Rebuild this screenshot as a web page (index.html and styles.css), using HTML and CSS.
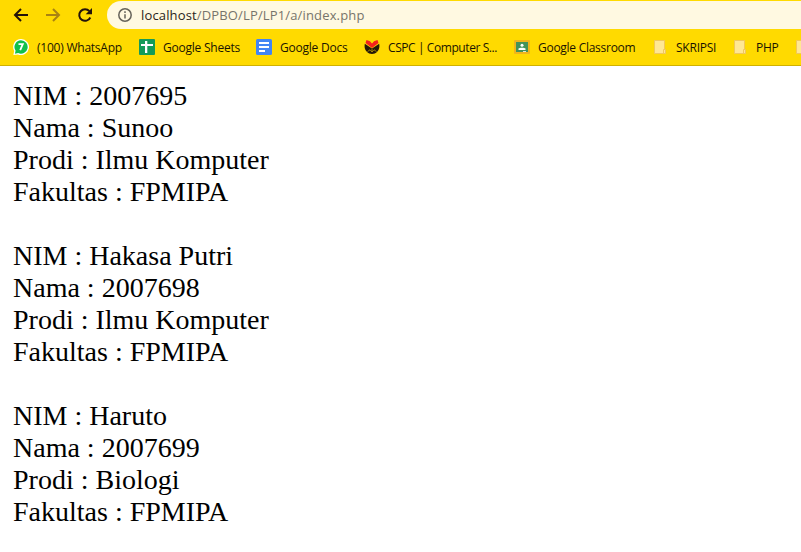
FILE: index.html
```html
<!DOCTYPE html>
<html lang="id">
<head>
<meta charset="utf-8">
<title>localhost/DPBO/LP/LP1/a/index.php</title>
<link rel="stylesheet" href="styles.css">
</head>
<body>
<header class="browser">
  <div class="toolbar">
    <svg class="nav" width="16" height="16" viewBox="0 0 16 16"><path d="M15 8H2.500M8 2L2 8l6 6"/></svg>
    <svg class="nav nav-off" width="16" height="16" viewBox="0 0 16 16"><path d="M1 8h12.500M8 2l6 6-6 6"/></svg>
    <svg class="nav" width="16" height="16" viewBox="0 0 16 16"><path d="M13.300 10.500A5.800 5.800 0 1 1 12.400 4.200"/><path class="solid" d="M15 1v6.300H8.700z"/></svg>
    <div class="address">
      <svg class="info" width="14" height="14" viewBox="0 0 14 14"><circle cx="7" cy="7" r="6.200"/><path d="M7 6.200v4.300M7 3.300v1.600"/></svg>
      <span class="url"><b>localhost</b>/DPBO/LP/LP1/a/index.php</span>
    </div>
  </div>
  <nav class="bookmarks">
    <a class="mark whatsapp"><svg width="16" height="16" viewBox="0 0 16 16"><path fill="#fff" d="M8 0a8 8 0 1 1-3 15.400L.4 16l.8-4A8 8 0 0 1 8 0z"/><path fill="#12c04b" d="M8 1.300a6.700 6.700 0 1 1-2.800 12.800l-3.300.6.7-3A6.700 6.700 0 0 1 8 1.300z"/><path fill="none" stroke="#fff" stroke-width="1.800" d="M5.500 5.200h4.300L7.200 11.200"/></svg><span>(100) WhatsApp</span></a>
    <a class="mark sheets"><svg width="16" height="16" viewBox="0 0 16 16"><rect width="16" height="16" rx="1" fill="#159b58"/><path fill="#fff" d="M2 5h4V2h2.300v3H14v2H8.300v7H6V7H2z"/></svg><span>Google Sheets</span></a>
    <a class="mark docs"><svg width="16" height="16" viewBox="0 0 16 16"><rect width="16" height="16" rx="1.500" fill="#4285f4"/><path fill="#fff" d="M3 3h10v2H3zM3 7h10v2H3zM3 11h6v2H3z"/></svg><span>Google Docs</span></a>
    <a class="mark cspc"><svg width="16" height="16" viewBox="0 0 16 16"><path fill="#251908" d="M.8 4.800L8 9.500l7.200-4.700c.6 3 .2 5.700-2 8-1.500 1.500-3.200 2.200-5.200 2.200s-3.700-.7-5.200-2.200c-2.200-2.300-2.600-5-2-8z"/><path fill="#f5221c" d="M2.500 1L6 2.300 8 4.500l2-2.200L13.500 1l1 3L8 9 1.500 4z"/><path fill="none" stroke="#b99a05" stroke-width=".8" d="M3.500 12.500L6 10.800 8 13l2-2.200 2.500 1.700M8 10v3"/><path fill="#ffda00" d="M5.500 1L8 3.800 10.500 1z"/></svg><span>CSPC | Computer S...</span></a>
    <a class="mark classroom"><svg width="16" height="16" viewBox="0 0 16 16"><rect y="1" width="16" height="14" rx="1" fill="#f0b51b"/><rect x="2" y="3" width="12" height="10" fill="#43925a"/><circle cx="8" cy="6.300" r="1.500" fill="#fff"/><path fill="#fff" d="M4.500 11V9.500C5.500 8.400 10.500 8.400 11.500 9.500V11z"/><path fill="#d9e7d8" d="M9 12h3v1H9z"/></svg><span>Google Classroom</span></a>
    <a class="mark folder skripsi"><svg width="12" height="14" viewBox="0 0 12 14"><path d="M.5.500h10v9h1v4H.5zM9.500 13v-3.500h1.500"/></svg><span>SKRIPSI</span></a>
    <a class="mark folder php"><svg width="12" height="14" viewBox="0 0 12 14"><path d="M.5.500h10v9h1v4H.5zM9.500 13v-3.500h1.500"/></svg><span>PHP</span></a>
    <a class="mark folder"><svg width="12" height="14" viewBox="0 0 12 14"><path d="M.5.500h10v9h1v4H.5z"/></svg></a>
  </nav>
</header>
<main class="page">
  <p>NIM : 2007695<br>Nama : Sunoo<br>Prodi : Ilmu Komputer<br>Fakultas : FPMIPA</p>
  <p>NIM : Hakasa Putri<br>Nama : 2007698<br>Prodi : Ilmu Komputer<br>Fakultas : FPMIPA</p>
  <p>NIM : Haruto<br>Nama : 2007699<br>Prodi : Biologi<br>Fakultas : FPMIPA</p>
</main>
</body>
</html>
```

FILE: styles.css
```css
* { box-sizing: border-box; }
body { margin: 0; background: #fff; overflow: hidden; }
svg { display: block; flex: none; }
.browser {
  height: 66px;
  background: #ffda00;
  border-bottom: 1px solid #d0b100;
  font-family: "Open Sans", sans-serif;
}
.toolbar { display: flex; align-items: center; gap: 16px; height: 30px; padding: 1px 0 1px 13px; }
.nav { fill: none; stroke: #23130a; stroke-width: 2; }
.nav-off { stroke: #a98312; }
.nav .solid { fill: #23130a; stroke: none; }
.address {
  display: flex;
  align-items: center;
  gap: 9px;
  flex: 1;
  height: 28px;
  margin-left: -2px;
  padding-left: 11px;
  background: #fff9e1;
  border-radius: 14px 0 0 14px;
}
.info { fill: none; stroke: #66635a; stroke-width: 1.5; }
.url { font-size: 13px; line-height: 20px; letter-spacing: .15px; color: #77746b; white-space: nowrap; }
.url b { font-weight: 400; color: #2b2420; }
.bookmarks { display: flex; height: 34px; padding-left: 13px; overflow: hidden; }
.mark {
  display: flex;
  align-items: center;
  flex: none;
  gap: 8px;
  color: #1a1400;
  font-size: 12px;
  letter-spacing: -.23px;
  white-space: nowrap;
}
.whatsapp { width: 126px; }
.sheets { width: 117px; }
.docs { width: 108px; }
.cspc { width: 150px; letter-spacing: -.42px; }
.classroom { width: 140px; letter-spacing: -.27px; }
.folder { gap: 10px; }
.folder path { fill: #ffe793; stroke: #f0c75c; }
.skripsi { width: 80px; }
.php { width: 62px; }
.page { padding: 14px 13px; font: 28px/32px "Liberation Serif", serif; color: #000; }
.page p { margin: 0 0 32px; }
```
